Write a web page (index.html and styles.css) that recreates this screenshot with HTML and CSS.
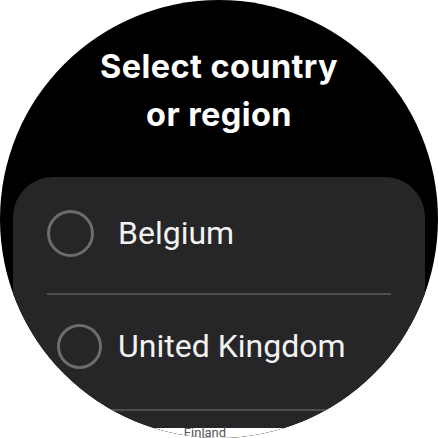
FILE: index.html
```html
<!DOCTYPE html>
<html lang="en">
<head>
<meta charset="utf-8">
<title>Select country or region</title>
<link rel="stylesheet" href="styles.css">
</head>
<body>
  <main class="screen">
    <h1 class="title">Select country<br>or region</h1>
    <section class="card">
      <label class="row row--first">
        <span class="radio"></span>
        <span class="label">Belgium</span>
      </label>
      <div class="divider"></div>
      <label class="row row--second">
        <span class="radio radio--inset"></span>
        <span class="label">United Kingdom</span>
      </label>
      <div class="divider"></div>
      <div class="peek"><span class="peek-label">Finland</span></div>
    </section>
  </main>
</body>
</html>
```

FILE: styles.css
```css
html, body {
  margin: 0;
  padding: 0;
  background: #fff;
}

.screen {
  width: 438px;
  height: 438px;
  border-radius: 50%;
  background: #000;
  overflow: hidden;
  display: flex;
  flex-direction: column;
  align-items: center;
}

.title {
  margin: 43px 0 0;
  color: #fff;
  font-family: Inter, "Open Sans", sans-serif;
  font-weight: 700;
  font-size: 32.5px;
  line-height: 48px;
  text-align: center;
  letter-spacing: 0.4px;
}

.card {
  margin-top: 38px;
  width: 412px;
  flex: 1;
  box-sizing: border-box;
  background: #262628;
  border-radius: 40px 40px 0 0;
  padding: 0 34px;
  display: flex;
  flex-direction: column;
}

.row {
  display: flex;
  align-items: center;
  font-family: Roboto, "Noto Sans", sans-serif;
  font-size: 32px;
  color: #f2f2f2;
}

.row--first {
  height: 112px;
  padding-bottom: 4px;
}

.row--second {
  height: 102px;
  padding-bottom: 12px;
}

.radio {
  width: 41px;
  height: 41px;
  border: 3px solid #6c6c6c;
  border-radius: 50%;
  flex: none;
  margin-right: 24px;
}

.radio--inset {
  width: 39px;
  height: 39px;
  margin-left: 10px;
  margin-right: 16px;
}

.label {
  line-height: 1;
}

.divider {
  height: 2px;
  background: #4e4e50;
}

.peek {
  margin: 17px -34px 0;
  flex: 1;
  background: #fff;
  display: flex;
  justify-content: center;
}

.peek-label {
  font-family: Roboto, "Noto Sans", sans-serif;
  font-size: 13px;
  line-height: 10px;
  color: #555;
  margin-left: -28px;
}
```
